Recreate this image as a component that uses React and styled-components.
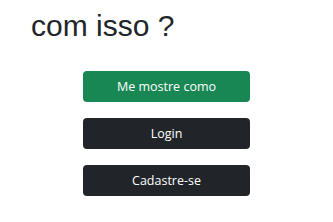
import React from "react";
import styled, { createGlobalStyle } from "styled-components";

const Global = createGlobalStyle`
  html, body { margin: 0; padding: 0; background: #ffffff; }
  body { font-family: "Liberation Sans", Arial, sans-serif; }
`;

const Page = styled.div`
  width: 333px;
  height: 222px;
  box-sizing: border-box;
  display: flex;
  flex-direction: column;
  padding-top: 8px;
`;

const Title = styled.h1`
  margin: 0 0 0 31px;
  font-family: "Liberation Sans", Arial, sans-serif;
  font-weight: 400;
  font-size: 30px;
  line-height: 36px;
  color: #212529;
`;

const Actions = styled.div`
  display: flex;
  flex-direction: column;
  align-items: center;
  gap: 16px;
  margin-top: 27px;
`;

const Button = styled.button`
  width: 167px;
  height: 31px;
  border: none;
  border-radius: 4px;
  background: ${(p) => (p.$variant === "success" ? "#198754" : "#212529")};
  color: #ffffff;
  font-family: "Open Sans", "Noto Sans", sans-serif;
  font-size: 12.5px;
  font-weight: 500;
  display: flex;
  align-items: center;
  justify-content: center;
  padding: 0;
`;

export default function App() {
  return (
    <>
      <Global />
      <Page>
        <Title>com isso ?</Title>
        <Actions>
          <Button $variant="success">Me mostre como</Button>
          <Button>Login</Button>
          <Button>Cadastre-se</Button>
        </Actions>
      </Page>
    </>
  );
}
